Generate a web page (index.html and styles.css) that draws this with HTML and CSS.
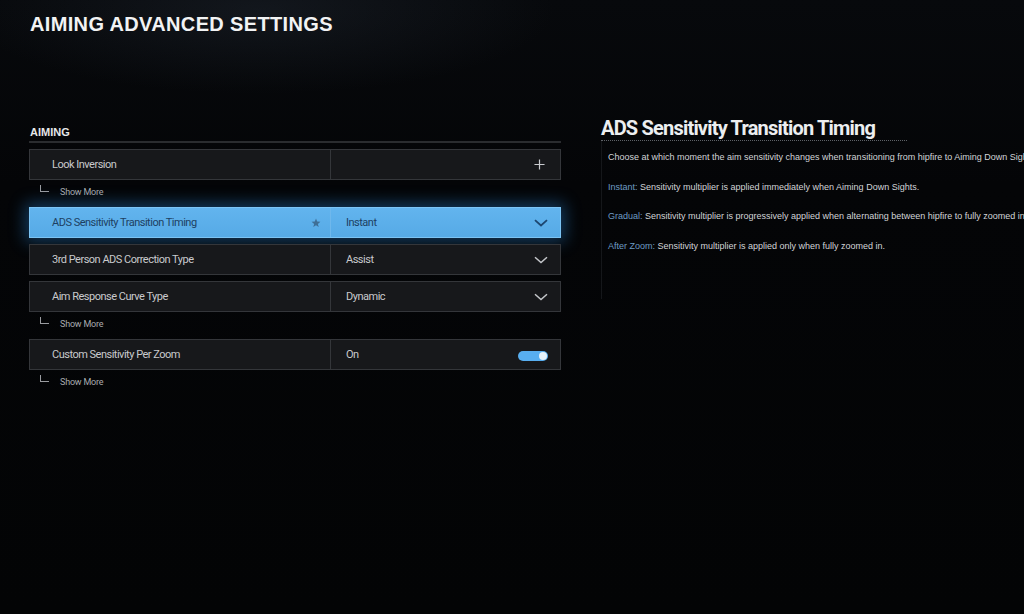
FILE: index.html
```html
<!DOCTYPE html>
<html lang="en">
<head>
<meta charset="utf-8">
<title>Aiming Advanced Settings</title>
<link rel="stylesheet" href="styles.css">
</head>
<body>
<div class="screen">
  <h1 class="page-title">AIMING ADVANCED SETTINGS</h1>
  <div class="layout">
    <section class="settings">
      <h2 class="section-head">AIMING</h2>
      <div class="rows">
        <div class="group">
          <div class="row">
            <div class="label">Look Inversion</div>
            <div class="value"><span></span>
              <svg class="icon plus" viewBox="0 0 12 12"><path d="M6 0.5V11.5M0.5 6H11.5" stroke="#c9cbcf" stroke-width="1.3" fill="none"/></svg>
            </div>
          </div>
          <div class="more"><span class="corner"></span>Show More</div>
        </div>
        <div class="group">
          <div class="row active">
            <div class="label">ADS Sensitivity Transition Timing
              <svg class="icon star" viewBox="0 0 10 10"><path d="M5 0.6L6.2 3.6L9.4 3.8L6.9 5.9L7.7 9.1L5 7.3L2.3 9.1L3.1 5.9L0.6 3.8L3.8 3.6Z" fill="#3f6f97"/></svg>
            </div>
            <div class="value"><span>Instant</span>
              <svg class="icon chev" viewBox="0 0 14 8"><path d="M1 1.2L7 6.5L13 1.2" stroke="#1d4670" stroke-width="1.8" fill="none"/></svg>
            </div>
          </div>
        </div>
        <div class="group">
          <div class="row">
            <div class="label">3rd Person ADS Correction Type</div>
            <div class="value"><span>Assist</span>
              <svg class="icon chev" viewBox="0 0 14 8"><path d="M1 1.2L7 6.5L13 1.2" stroke="#c4c6ca" stroke-width="1.5" fill="none"/></svg>
            </div>
          </div>
        </div>
        <div class="group">
          <div class="row">
            <div class="label">Aim Response Curve Type</div>
            <div class="value"><span>Dynamic</span>
              <svg class="icon chev" viewBox="0 0 14 8"><path d="M1 1.2L7 6.5L13 1.2" stroke="#c4c6ca" stroke-width="1.5" fill="none"/></svg>
            </div>
          </div>
          <div class="more"><span class="corner"></span>Show More</div>
        </div>
        <div class="group">
          <div class="row">
            <div class="label">Custom Sensitivity Per Zoom</div>
            <div class="value"><span>On</span>
              <span class="toggle"><span class="knob"></span></span>
            </div>
          </div>
          <div class="more"><span class="corner"></span>Show More</div>
        </div>
      </div>
    </section>
    <aside class="details">
      <h2 class="details-title">ADS Sensitivity Transition Timing</h2>
      <div class="details-body">
        <p>Choose at which moment the aim sensitivity changes when transitioning from hipfire to Aiming Down Sights.</p>
        <p><span class="key">Instant:</span> Sensitivity multiplier is applied immediately when Aiming Down Sights.</p>
        <p><span class="key">Gradual:</span> Sensitivity multiplier is progressively applied when alternating between hipfire to fully zoomed in.</p>
        <p><span class="key">After Zoom:</span> Sensitivity multiplier is applied only when fully zoomed in.</p>
      </div>
    </aside>
  </div>
</div>
</body>
</html>
```

FILE: styles.css
```css
html, body {
  margin: 0;
  padding: 0;
  height: 100%;
}
body {
  background: #040507;
  overflow: hidden;
  font-family: Roboto, "Liberation Sans", sans-serif;
  color: #d8d9db;
}
.screen {
  width: 1024px;
  height: 614px;
  box-sizing: border-box;
  background:
    radial-gradient(ellipse 420px 120px at 260px 10px, rgba(40,48,60,0.35), rgba(0,0,0,0) 70%),
    linear-gradient(180deg, #07090c 0%, #040507 30%, #030405 100%);
  display: flex;
  flex-direction: column;
}
.page-title {
  margin: 12px 0 0 30px;
  font-family: "Liberation Sans", sans-serif;
  font-weight: 700;
  font-size: 20px;
  letter-spacing: 0.35px;
  line-height: 24px;
  color: #f2f3f4;
}
.layout {
  display: flex;
  margin-top: 81px;
  align-items: flex-start;
}
.settings {
  width: 532px;
  flex-shrink: 0;
  margin-left: 29px;
  margin-top: 9px;
}
.section-head {
  margin: 0;
  padding: 0 0 2px 1px;
  font-family: "Liberation Sans", sans-serif;
  font-weight: 700;
  font-size: 11px;
  line-height: 13px;
  color: #e6e7e9;
  border-bottom: 2px solid #2a2c2f;
}
.rows {
  display: flex;
  flex-direction: column;
  gap: 6px;
  margin-top: 6px;
}
.row {
  display: flex;
  height: 31px;
  box-sizing: border-box;
  background: #17181b;
  border: 1px solid #34363a;
  font-size: 11px;
  letter-spacing: -0.5px;
  color: #c9cacd;
}
.label {
  width: 301px;
  box-sizing: border-box;
  padding-left: 22px;
  padding-right: 9px;
  display: flex;
  align-items: center;
  justify-content: space-between;
  border-right: 1px solid #34363a;
}
.value {
  flex: 1;
  display: flex;
  align-items: center;
  justify-content: space-between;
  padding-left: 15px;
  padding-right: 12px;
}
.row.active {
  background: linear-gradient(180deg, #62b4ee 0%, #56aae6 100%);
  border-color: #7cc4f4;
  color: #1e3f62;
  box-shadow: 0 0 16px 4px rgba(40, 130, 210, 0.42);
}
.row.active .label {
  border-right-color: #6fb8ec;
}
.icon {
  display: block;
}
.plus {
  width: 11px;
  height: 11px;
  margin-right: 3px;
}
.chev {
  width: 14px;
  height: 8px;
}
.star {
  width: 10px;
  height: 10px;
}
.toggle {
  width: 30px;
  height: 10px;
  border-radius: 5px;
  background: #58aef0;
  display: flex;
  justify-content: flex-end;
  align-items: center;
  padding: 0 1px;
  box-sizing: border-box;
  margin-top: 2px;
}
.knob {
  width: 8px;
  height: 8px;
  border-radius: 50%;
  background: #e6f2fb;
}
.more {
  height: 21px;
  display: flex;
  align-items: center;
  padding-left: 11px;
  padding-top: 2px;
  box-sizing: border-box;
  font-size: 9px;
  letter-spacing: -0.2px;
  color: #a9abaf;
}
.corner {
  width: 8px;
  height: 6px;
  border-left: 1px solid #9a9ca0;
  border-bottom: 1px solid #9a9ca0;
  margin-right: 11px;
  margin-top: -7px;
}
.details {
  margin-left: 40px;
  flex: 1;
  min-width: 0;
}
.details-title {
  margin: 0;
  display: inline-block;
  font-weight: 700;
  font-size: 20px;
  line-height: 22px;
  letter-spacing: -0.8px;
  color: #eceef0;
  padding-right: 32px;
  padding-bottom: 1px;
  border-bottom: 1px dotted #5d6166;
}
.details-body {
  border-left: 1px solid #15171a;
  padding: 10px 0 30px 6px;
  min-height: 100px;
  white-space: nowrap;
  overflow: hidden;
}
.details-body p {
  margin: 0 0 17.5px 0;
  font-family: "Liberation Sans", sans-serif;
  font-size: 9px;
  line-height: 12px;
  color: #d2d4d7;
}
.key {
  color: #6e9cc4;
}
```
